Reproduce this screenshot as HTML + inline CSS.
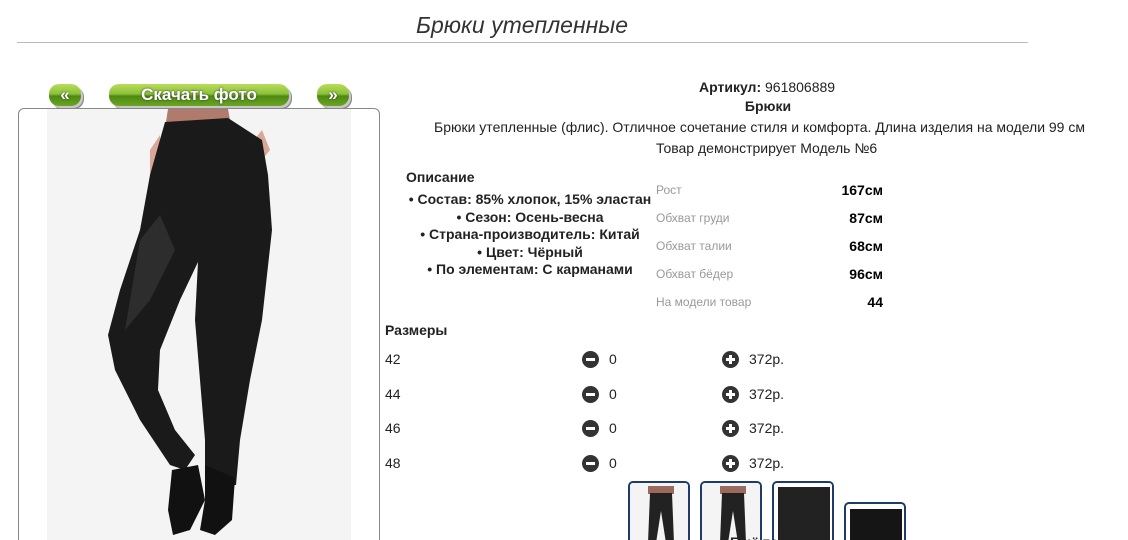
<!DOCTYPE html>
<html style="width:1128px;height:540px;overflow:hidden"><head><meta charset="utf-8"><style>
*{margin:0;padding:0;box-sizing:border-box}
body{width:1128px;height:540px;overflow:hidden;background:#fff;font-family:"Liberation Sans",Arial,sans-serif;color:#222}
#w{position:relative;width:1128px;height:540px;overflow:hidden}
.a{position:absolute;white-space:nowrap}
h1{position:absolute;left:0;width:1044px;top:12px;text-align:center;font-weight:normal;font-style:italic;font-size:23px;color:#333}
.line{position:absolute;left:17px;top:42px;width:1011px;height:1px;background:#bbb}
.btn{position:absolute;top:84px;height:22px;border-radius:10px;background:linear-gradient(#b9dc5a 0%,#8cc23a 45%,#4e8a12 55%,#6aa522 100%);color:#fff;font-weight:bold;font-size:17px;text-align:center;line-height:22px;box-shadow:2px 2px 0 #c8c8c8,3px 3px 0 #888;text-shadow:0 0 2px #333}
.box{position:absolute;left:18px;top:108px;width:362px;height:450px;border:1px solid #888;border-radius:6px}
.c{text-align:center;font-size:14px}
.dl{position:absolute;left:656px;font-size:12px;color:#999}
.dr{position:absolute;left:800px;width:83px;text-align:right;font-size:14px;font-weight:bold;color:#000}
.ic{position:absolute;width:17px;height:17px;border-radius:50%;background:#333}
.ic:before{content:"";position:absolute;left:4px;top:7px;width:9px;height:3px;background:#fff}
.p:after{content:"";position:absolute;left:7px;top:4px;width:3px;height:9px;background:#fff}
.sz{position:absolute;font-size:14px;color:#222}
.th{position:absolute;width:62px;height:80px;border:2px solid #1e3b6a;border-radius:5px;background:#fff;overflow:hidden}
</style></head><body><div id="w">
<h1>Брюки утепленные</h1>
<div class="line"></div>
<div class="btn" style="left:49px;width:32px">«</div>
<div class="btn" style="left:109px;width:180px">Скачать фото</div>
<div class="btn" style="left:317px;width:32px">»</div>
<div class="box"></div>
<svg class="a" style="left:0;top:0" width="400" height="540">
<rect x="47" y="109" width="304" height="431" fill="#f4f4f4"/>
<path d="M168 109 L228 109 L230 120 L166 122Z" fill="#b07a6c"/>
<path d="M150 150 L160 135 L162 190 L150 185Z M238 160 L262 130 L270 150 L250 175Z" fill="#d9a796"/>
<path d="M165 122 L228 118 L262 140 L268 175 L272 230 L262 320 L250 380 L240 440 L236 485 L205 485 L205 440 L200 380 L195 320 L198 262 L180 300 L160 350 L158 390 L175 430 L195 455 L185 470 L170 465 L140 420 L115 370 L108 335 L120 290 L140 230 L150 175Z" fill="#1a1a1a"/>
<path d="M140 240 L160 215 L175 250 L150 300 L125 330Z" fill="#3a3a3a" opacity=".6"/>
<path d="M205 465 L235 478 L232 520 L215 535 L200 530 L205 500Z M172 470 L198 465 L205 500 L190 530 L173 535 L168 510Z" fill="#111"/>
</svg>
<div class="a c" style="left:699px;top:79px;width:136px"><b>Артикул:</b> 961806889</div>
<div class="a c" style="left:700px;top:98px;width:136px;font-weight:bold">Брюки</div>
<div class="a" style="left:434px;top:119px;font-size:14px">Брюки утепленные (флис). Отличное сочетание стиля и комфорта. Длина изделия на модели 99 см</div>
<div class="a" style="left:656px;top:140px;font-size:14px">Товар демонстрирует Модель №6</div>
<div class="a" style="left:406px;top:169px;font-size:14px;font-weight:bold">Описание</div>
<div class="a" style="left:402px;top:191px;width:256px;text-align:center;font-size:14px;font-weight:bold;line-height:17.5px">• Состав: 85% хлопок, 15% эластан<br>• Сезон: Осень-весна<br>• Страна-производитель: Китай<br>• Цвет: Чёрный<br>• По элементам: С карманами</div>
<div class="dl" style="top:183px">Рост</div><div class="dr" style="top:182px">167см</div>
<div class="dl" style="top:211px">Обхват груди</div><div class="dr" style="top:210px">87см</div>
<div class="dl" style="top:239px">Обхват талии</div><div class="dr" style="top:238px">68см</div>
<div class="dl" style="top:267px">Обхват бёдер</div><div class="dr" style="top:266px">96см</div>
<div class="dl" style="top:295px">На модели товар</div><div class="dr" style="top:294px">44</div>
<div class="a" style="left:385px;top:322px;font-size:14px;font-weight:bold">Размеры</div>
<div class="sz" style="left:385px;top:351px">42</div><div class="ic" style="left:582px;top:351px"></div><div class="sz" style="left:609px;top:351px">0</div><div class="ic p" style="left:722px;top:351px"></div><div class="sz" style="left:749px;top:351px">372р.</div>
<div class="sz" style="left:385px;top:386px">44</div><div class="ic" style="left:582px;top:386px"></div><div class="sz" style="left:609px;top:386px">0</div><div class="ic p" style="left:722px;top:386px"></div><div class="sz" style="left:749px;top:386px">372р.</div>
<div class="sz" style="left:385px;top:420px">46</div><div class="ic" style="left:582px;top:420px"></div><div class="sz" style="left:609px;top:420px">0</div><div class="ic p" style="left:722px;top:420px"></div><div class="sz" style="left:749px;top:420px">372р.</div>
<div class="sz" style="left:385px;top:455px">48</div><div class="ic" style="left:582px;top:455px"></div><div class="sz" style="left:609px;top:455px">0</div><div class="ic p" style="left:722px;top:455px"></div><div class="sz" style="left:749px;top:455px">372р.</div>
<div class="th" style="left:628px;top:481px"><svg width="62" height="80"><rect width="62" height="80" fill="#f4f4f4"/><rect x="18" y="3" width="26" height="8" fill="#9a6a5e"/><path d="M20 10 L42 10 L44 60 L36 60 L31 28 L26 60 L18 60Z" fill="#222"/></svg></div>
<div class="th" style="left:700px;top:481px"><svg width="62" height="80"><rect width="62" height="80" fill="#f4f4f4"/><rect x="18" y="3" width="26" height="8" fill="#9a6a5e"/><path d="M20 10 L42 10 L44 60 L36 60 L31 28 L26 60 L18 60Z" fill="#222"/></svg></div>
<div class="th" style="left:772px;top:481px"><svg width="62" height="80"><rect width="62" height="80" fill="#fff"/><rect x="4" y="4" width="52" height="80" fill="#222"/></svg></div>
<div class="th" style="left:844px;top:502px"><svg width="62" height="80"><rect x="4" y="5" width="52" height="80" fill="#151515"/></svg></div>
<div class="a" style="left:730px;top:534px;font-size:14px;font-weight:bold">Ещё товары</div>
</div></body></html>
